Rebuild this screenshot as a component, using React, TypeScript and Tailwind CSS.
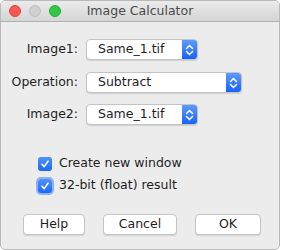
import React from 'react';

const font = { fontFamily: '"DejaVu Sans", "Liberation Sans", sans-serif' };

const Arrows = () => (
    <svg width="9" height="12" viewBox="0 0 9 12" fill="none" stroke="white" strokeWidth="1.5" strokeLinecap="round" strokeLinejoin="round">
        <path d="M1.5 4.5 L4.5 1.5 L7.5 4.5" />
        <path d="M1.5 7.5 L4.5 10.5 L7.5 7.5" />
    </svg>
);

const Select = ({ value, width }: { value: string; width: string }) => (
    <div className={`${width} h-[21px] flex items-stretch rounded-[4px] bg-white border border-[#c4c4c4] shadow-[0_1px_1px_rgba(0,0,0,0.12)] overflow-hidden`}>
        <div className="flex-1 flex items-center pl-[11px] text-[12.5px] text-[#1e1e1e]">{value}</div>
        <div className="w-[15px] flex items-center justify-center bg-gradient-to-b from-[#5d9bfb] to-[#1662f6]">
            <Arrows />
        </div>
    </div>
);

const Check = ({ label, focus }: { label: string; focus?: boolean }) => (
    <div className="flex items-center h-[15px]">
        <div className={`w-[14px] h-[14px] rounded-[3px] flex items-center justify-center bg-gradient-to-b from-[#4d92fb] to-[#1d67f5] ${focus ? 'shadow-[0_0_0_2px_rgba(110,160,240,0.75)]' : ''}`}>
            <svg width="10" height="10" viewBox="0 0 10 10" fill="none" stroke="white" strokeWidth="1.6" strokeLinecap="round" strokeLinejoin="round">
                <path d="M2 5.2 L4.2 7.6 L8 2.2" />
            </svg>
        </div>
        <span className="ml-[7px] text-[12.5px] text-[#1e1e1e]">{label}</span>
    </div>
);

const Btn = ({ label, width }: { label: string; width: string }) => (
    <div className={`${width} h-[21px] flex items-center justify-center rounded-[4px] bg-white border border-[#c6c6c6] shadow-[0_1px_1px_rgba(0,0,0,0.12)] text-[12.5px] text-[#1e1e1e]`}>
        {label}
    </div>
);

export default function App() {
    return (
        <div className="w-[281px] h-[250px] bg-white" style={font}>
            <div className="w-[280px] h-[250px] rounded-[5px] border border-[#b9b9b9] bg-[#ececec] overflow-hidden flex flex-col">
                {/* Title bar */}
                <div className="h-[21px] shrink-0 relative flex items-center justify-center bg-gradient-to-b from-[#ebebeb] to-[#d5d5d5] border-b border-[#b1b1b1]">
                    <div className="absolute left-[8px] top-[4px] flex gap-[8px]">
                        <div className="w-[12px] h-[12px] rounded-full bg-[#fc5753] border border-[#de4440]" />
                        <div className="w-[12px] h-[12px] rounded-full bg-[#d0d0d0] border border-[#bdbdbd]" />
                        <div className="w-[12px] h-[12px] rounded-full bg-[#33c748] border border-[#27a937]" />
                    </div>
                    <span className="text-[12.5px] text-[#4a4a4a]">Image Calculator</span>
                </div>

                {/* Body */}
                <div className="flex flex-col pt-[17px]">
                    <div className="flex items-center">
                        <div className="w-[77px] text-right text-[12.5px] text-[#1e1e1e]">Image1:</div>
                        <div className="ml-[8px]"><Select value="Same_1.tif" width="w-[112px]" /></div>
                    </div>
                    <div className="flex items-center mt-[12px]">
                        <div className="w-[77px] text-right text-[12.5px] text-[#1e1e1e]">Operation:</div>
                        <div className="ml-[8px]"><Select value="Subtract" width="w-[156px]" /></div>
                    </div>
                    <div className="flex items-center mt-[11px]">
                        <div className="w-[77px] text-right text-[12.5px] text-[#1e1e1e]">Image2:</div>
                        <div className="ml-[8px]"><Select value="Same_1.tif" width="w-[112px]" /></div>
                    </div>

                    <div className="flex flex-col gap-[7px] pl-[37px] mt-[31px]">
                        <Check label="Create new window" />
                        <Check label="32-bit (float) result" focus />
                    </div>

                    <div className="flex gap-[18px] pl-[22px] mt-[21px]">
                        <Btn label="Help" width="w-[62px]" />
                        <Btn label="Cancel" width="w-[74px]" />
                        <Btn label="OK" width="w-[66px]" />
                    </div>
                </div>
            </div>
        </div>
    );
}
